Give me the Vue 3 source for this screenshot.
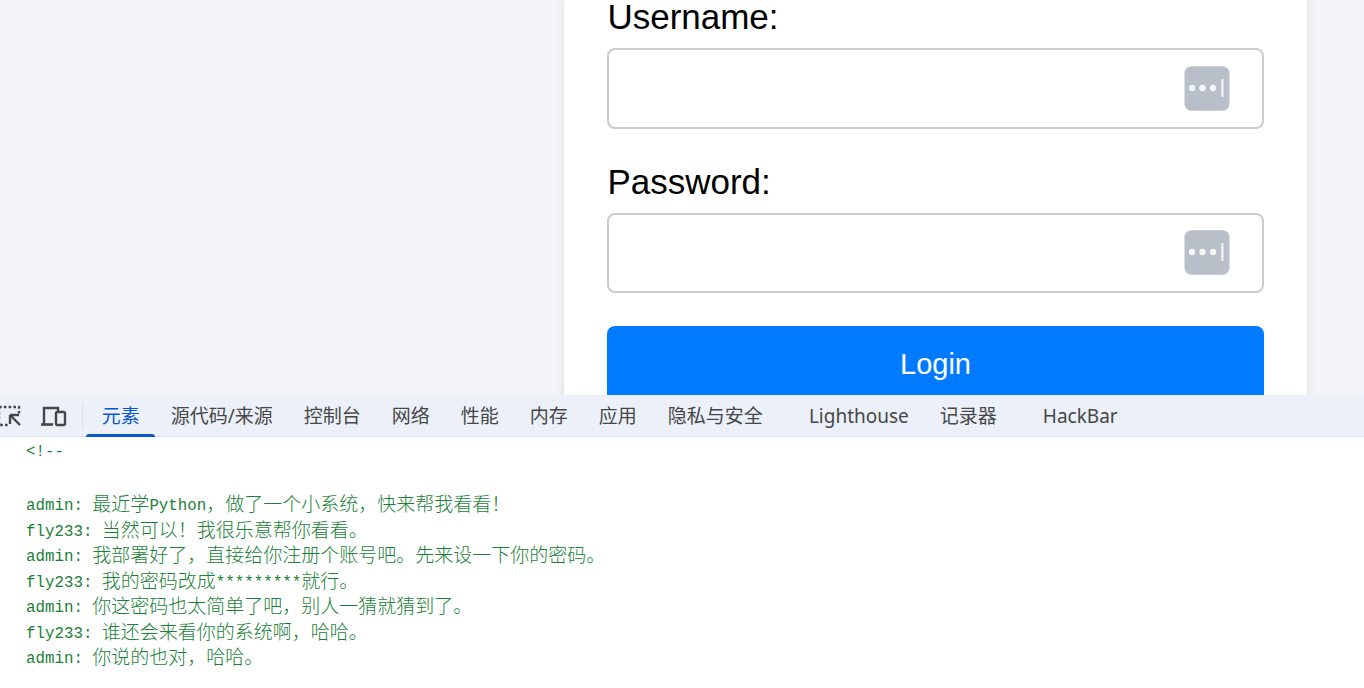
<script setup>
const tabs = [
  { t: '元素', active: true },
  { t: '源代码/来源' },
  { t: '控制台' },
  { t: '网络' },
  { t: '性能' },
  { t: '内存' },
  { t: '应用' },
  { t: '隐私与安全' },
  { t: 'Lighthouse', wide: true },
  { t: '记录器' },
  { t: 'HackBar', wide: true }
]
const lines = [
  '<!--',
  '',
  'admin: 最近学Python，做了一个小系统，快来帮我看看！',
  'fly233: 当然可以！我很乐意帮你看看。',
  'admin: 我部署好了，直接给你注册个账号吧。先来设一下你的密码。',
  'fly233: 我的密码改成*********就行。',
  'admin: 你这密码也太简单了吧，别人一猜就猜到了。',
  'fly233: 谁还会来看你的系统啊，哈哈。',
  'admin: 你说的也对，哈哈。'
]
const parsed = lines.map(l => (l.match(/[\x00-\x7f]+|[^\x00-\x7f]+/g) || []).map(s => ({
  s,
  latin: /^[\x00-\x7f]/.test(s)
})))
const fields = ['Username:', 'Password:']
</script>

<template>
  <div class="root">
    <div class="page">
      <div class="card">
        <div v-for="f in fields" :key="f" class="field">
          <label class="label">{{ f }}</label>
          <div class="input">
            <svg class="key" width="46" height="45" viewBox="0 0 46 45">
              <rect x="0.5" y="0.250" width="45" height="44.500" rx="7" fill="#b8bfc9" />
              <circle cx="8" cy="22" r="3.200" fill="#f4f5f7" />
              <circle cx="18.500" cy="22" r="3.200" fill="#f4f5f7" />
              <circle cx="29" cy="22" r="3.200" fill="#f4f5f7" />
              <rect x="37.300" y="13" width="2.200" height="18" fill="#f4f5f7" />
            </svg>
          </div>
        </div>
        <button class="login">Login</button>
      </div>
    </div>
    <div class="devtools">
      <div class="bar">
        <svg class="tool inspect" width="24" height="24" viewBox="0 0 24 24">
          <path d="M1 3h20v8M1 3v18h9" fill="none" stroke="#474747" stroke-width="2.4" stroke-dasharray="2.6 2.2" />
          <path d="M12 11h9M12 11v9M12 11l10 10" fill="none" stroke="#474747" stroke-width="2.4" />
        </svg>
        <svg class="tool device" width="26" height="24" viewBox="0 0 26 24">
          <path d="M3 20V4h14v3" fill="none" stroke="#474747" stroke-width="2.4" />
          <path d="M0 20.500h12" stroke="#474747" stroke-width="2.6" />
          <rect x="15" y="8" width="9" height="13" rx="1.500" fill="none" stroke="#474747" stroke-width="2.4" />
        </svg>
        <span class="sep"></span>
        <div class="tabs">
          <div v-for="tab in tabs" :key="tab.t" class="tab" :class="{ active: tab.active, wide: tab.wide }">{{ tab.t }}</div>
        </div>
      </div>
      <div class="console">
        <div v-for="(l, i) in parsed" :key="i" class="line"><span v-for="(p, j) in l" :key="j" :class="p.latin ? 'latin' : 'cjk'">{{ p.s }}</span></div>
      </div>
    </div>
  </div>
</template>

<style scoped>
.root {
  width: 1364px;
  height: 688px;
  overflow: hidden;
  display: flex;
  flex-direction: column;
  background: #fff;
}
.page {
  height: 395px;
  flex: none;
  overflow: hidden;
  background: #f4f4f9;
}
.card {
  width: 743px;
  margin-left: 564px;
  padding: 0 43px;
  box-sizing: border-box;
  background: #fff;
  box-shadow: 0 0 10px rgba(0, 0, 0, 0.1);
  height: 420px;
  font-family: "Liberation Sans", Arial, sans-serif;
}
.field {
  margin-bottom: 33px;
}
.label {
  display: block;
  font-size: 35px;
  line-height: 34px;
  margin: 0 0 14px 0.4px;
  color: #000;
}
.field + .field .label {
  margin-top: 36px;
}
.input {
  height: 80.5px;
  box-sizing: border-box;
  border: 2px solid #ccc;
  border-radius: 8px;
  background: #fff;
  display: flex;
  align-items: center;
  justify-content: flex-end;
  padding-right: 32.5px;
}
.field:first-child {
  margin-bottom: 0;
}
.key {
  display: block;
}
.login {
  display: block;
  width: 100%;
  height: 76px;
  border: none;
  border-radius: 8px;
  background: #007bff;
  color: #fff;
  font-family: inherit;
  font-size: 29px;
  padding: 0;
}
.devtools {
  flex: 1;
  min-height: 0;
  display: flex;
  flex-direction: column;
}
.bar {
  height: 42px;
  flex: none;
  box-sizing: border-box;
  background: #ebf0f9;
  border-bottom: 1px solid #d3e3fd;
  display: flex;
  align-items: stretch;
}
.tool {
  flex: none;
  align-self: center;
}
.inspect {
  margin-left: -2px;
}
.device {
  margin-left: 19px;
}
.sep {
  flex: none;
  width: 1px;
  height: 26px;
  align-self: center;
  margin-left: 15px;
  background: #d3e3fd;
}
.tabs {
  display: flex;
  margin-left: 3.2px;
  font-family: "Noto Sans", "Noto Sans CJK SC", sans-serif;
  font-size: 19px;
  color: #474747;
}
.tab {
  position: relative;
  padding: 0 15.5px;
  line-height: 42px;
  white-space: nowrap;
}
.tab.wide {
  margin-left: 15px;
}
.tab.active {
  color: #0b57d0;
}
.tab.active::after {
  content: "";
  position: absolute;
  left: 0;
  right: 0;
  bottom: -1px;
  height: 3px;
  background: #0b57d0;
  border-radius: 3px 3px 0 0;
}
.console {
  padding: 2px 0 0 26px;
  color: #1a7f37;
}
.line {
  height: 25.5px;
  line-height: 25.5px;
  white-space: pre;
}
.latin {
  font-family: "Liberation Mono", monospace;
  font-size: 15.8px;
  vertical-align: 1px;
}
.cjk {
  font-family: "Noto Sans CJK SC", sans-serif;
  font-size: 19px;
  font-weight: 300;
}
</style>
